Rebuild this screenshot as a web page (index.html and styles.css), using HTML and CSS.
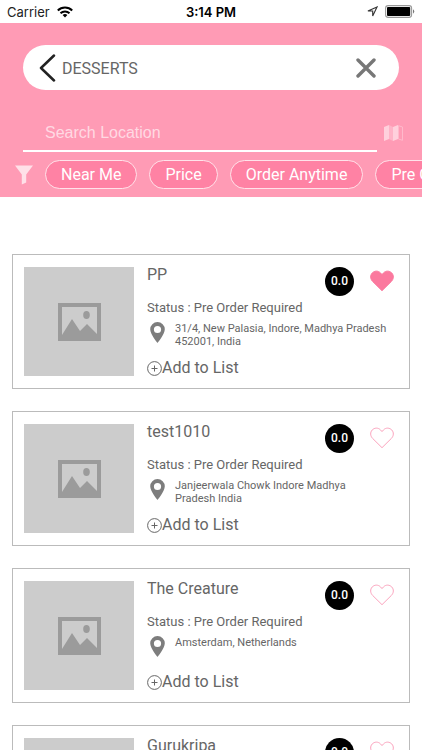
FILE: index.html
```
<!DOCTYPE html>
<html lang="en">
<head>
<meta charset="utf-8">
<meta name="viewport" content="width=device-width, initial-scale=1">
<title>Desserts</title>
<link rel="stylesheet" href="styles.css">
</head>
<body>
<svg class="sprite" aria-hidden="true">
  <symbol id="picture" viewBox="0 0 43 38">
    <path fill="#9b9b9b" fill-rule="evenodd" d="M0 0H43V38H0ZM4 4V32L14 16 22 28 29 21 39 31V4Z"/>
    <ellipse cx="28.500" cy="12" rx="3.300" ry="4" fill="#9b9b9b"/>
  </symbol>
  <symbol id="pin" viewBox="0 0 15 21">
    <path fill="#7d7d7d" fill-rule="evenodd" d="M7.500 0A7.300 7.300 0 0 0 .2 7.300C.2 12.500 7.500 21 7.500 21S14.800 12.500 14.800 7.300A7.300 7.300 0 0 0 7.500 0ZM7.500 3.900A3.600 3.600 0 1 1 7.500 11.100A3.600 3.600 0 1 1 7.500 3.900Z"/>
  </symbol>
  <symbol id="plus" viewBox="0 0 15 15">
    <path fill="none" stroke="#666" d="M7.500 .6A6.900 6.900 0 1 1 7.500 14.400A6.900 6.900 0 1 1 7.500 .6ZM7.500 4.500V10.500M4.500 7.500H10.500"/>
  </symbol>
  <symbol id="heart" viewBox="0 0 24 22">
    <path d="M12 20.700 2.600 11.400C.1 8.900 .1 5.200 2.200 3 4.500 .6 8.200 .5 10.400 2.800L12 4.600 13.600 2.800C15.800 .5 19.500 .6 21.800 3 23.900 5.200 23.900 8.900 21.400 11.400Z"/>
  </symbol>
</svg>
<div class="app">
  <div class="status-bar">
    <div class="carrier">
      <span>Carrier</span>
      <svg width="16" height="12" viewBox="0 0 16 12" aria-hidden="true"><g fill="none" stroke="#000" stroke-width="2"><path d="M.8 4.500A10.200 10.200 0 0 1 15.200 4.500"/><path d="M3.500 7.300A6.400 6.400 0 0 1 12.500 7.300"/></g><path d="M8 11.600 5.600 9.100A3.400 3.400 0 0 1 10.400 9.100Z"/></svg>
    </div>
    <time class="clock">3:14 PM</time>
    <div class="power">
      <svg width="11" height="11" viewBox="0 0 11 11" aria-hidden="true"><path fill="none" stroke="#333" stroke-width="1.100" d="M10 1 .9 5H5.700V10Z"/></svg>
      <svg width="30" height="13" viewBox="0 0 30 13" aria-hidden="true"><rect x=".6" y=".6" width="26" height="11.800" rx="2.600" fill="#fff" stroke="#999" stroke-width="1.100"/><rect x="2" y="2" width="23.200" height="9" rx="1"/><path fill="#777" d="M28 4.300Q30.500 6.500 28 8.700Z"/></svg>
    </div>
  </div>
  <header class="header">
    <div class="search-pill">
      <button class="icon-button" aria-label="Back"><svg width="17" height="28" viewBox="0 0 17 28"><path fill="none" stroke="#222" stroke-width="2.500" stroke-linecap="round" stroke-linejoin="round" d="M15 1.500 2 14 15 26.500"/></svg></button>
      <h1 class="heading">DESSERTS</h1>
      <button class="icon-button" aria-label="Clear"><svg width="20" height="20" viewBox="0 0 20 20"><path stroke="#777" stroke-width="3.400" stroke-linecap="round" d="M2 2 18 18M18 2 2 18"/></svg></button>
    </div>
    <div class="location">
      <input class="location-input" type="text" placeholder="Search Location" aria-label="Search Location">
      <button class="icon-button" aria-label="Map"><svg width="19" height="16" viewBox="0 0 19 16"><path fill="#ffd0dc" d="M0 2 5 0V14L0 16Z"/><path fill="#ffb3c7" d="M5 0 9 2V16L5 14Z"/><path fill="#ffd0dc" d="M9 2 14 0V14L9 16Z"/><path fill="none" stroke="#ffb9cb" d="M14.500 .7 18.500 2V15.300L14.500 14Z"/></svg></button>
    </div>
    <div class="filters">
      <button class="icon-button" aria-label="Filter"><svg width="18" height="20" viewBox="0 0 18 20"><path fill="#ffe0e8" d="M0 .5H18L11.200 9.500V17.500L6.800 19.500V9.500Z"/></svg></button>
      <button class="chip">Near Me</button>
      <button class="chip">Price</button>
      <button class="chip">Order Anytime</button>
      <button class="chip">Pre Order</button>
    </div>
  </header>
  <main class="list">
    <article class="card">
      <div class="photo"><svg width="43" height="38"><use href="#picture"/></svg></div>
      <div class="details">
        <div class="top-row"><h2 class="name">PP</h2><span class="rating">0.0</span><button class="icon-button like liked" aria-label="Remove favourite"><svg width="24" height="22"><use href="#heart"/></svg></button></div>
        <p class="order-status">Status : Pre Order Required</p>
        <div class="place"><svg width="15" height="21"><use href="#pin"/></svg><address class="address">31/4, New Palasia, Indore, Madhya Pradesh 452001, India</address></div>
        <button class="add"><svg width="15" height="15"><use href="#plus"/></svg>Add to List</button>
      </div>
    </article>
    <article class="card">
      <div class="photo"><svg width="43" height="38"><use href="#picture"/></svg></div>
      <div class="details">
        <div class="top-row"><h2 class="name">test1010</h2><span class="rating">0.0</span><button class="icon-button like" aria-label="Add favourite"><svg width="24" height="22"><use href="#heart"/></svg></button></div>
        <p class="order-status">Status : Pre Order Required</p>
        <div class="place"><svg width="15" height="21"><use href="#pin"/></svg><address class="address">Janjeerwala Chowk Indore Madhya Pradesh India</address></div>
        <button class="add"><svg width="15" height="15"><use href="#plus"/></svg>Add to List</button>
      </div>
    </article>
    <article class="card">
      <div class="photo"><svg width="43" height="38"><use href="#picture"/></svg></div>
      <div class="details">
        <div class="top-row"><h2 class="name">The Creature</h2><span class="rating">0.0</span><button class="icon-button like" aria-label="Add favourite"><svg width="24" height="22"><use href="#heart"/></svg></button></div>
        <p class="order-status">Status : Pre Order Required</p>
        <div class="place"><svg width="15" height="21"><use href="#pin"/></svg><address class="address">Amsterdam, Netherlands</address></div>
        <button class="add"><svg width="15" height="15"><use href="#plus"/></svg>Add to List</button>
      </div>
    </article>
    <article class="card">
      <div class="photo"><svg width="43" height="38"><use href="#picture"/></svg></div>
      <div class="details">
        <div class="top-row"><h2 class="name">Gurukripa</h2><span class="rating">0.0</span><button class="icon-button like" aria-label="Add favourite"><svg width="24" height="22"><use href="#heart"/></svg></button></div>
      </div>
    </article>
  </main>
</div>
</body>
</html>
```
FILE: styles.css
```
* {
  box-sizing: border-box;
}

body {
  margin: 0;
  background: #fff;
  color: #666;
  font-family: Roboto, "Liberation Sans", sans-serif;
  font-size: 16px;
}

button {
  margin: 0;
  padding: 0;
  border: 0;
  background: none;
  color: inherit;
  font: inherit;
}

svg {
  display: block;
  flex: none;
}

.sprite {
  position: absolute;
  width: 0;
  height: 0;
}

.app {
  display: flex;
  flex-direction: column;
  height: 100vh;
  overflow: hidden;
}

.status-bar {
  display: grid;
  grid-template-columns: 1fr auto 1fr;
  align-items: center;
  flex: none;
  height: 23px;
  padding: 0 7px;
  color: #222;
  font-family: Inter, "Liberation Sans", sans-serif;
  font-size: 13px;
}

.carrier,
.power {
  display: flex;
  align-items: center;
  gap: 7px;
}

.power {
  justify-content: flex-end;
}

.clock {
  color: #000;
  font-weight: 600;
}

.header {
  flex: none;
  padding: 22px 0 8px;
  background: #ff9bb5;
}

.search-pill {
  display: flex;
  align-items: center;
  gap: 6px;
  height: 45px;
  margin: 0 23px;
  padding: 0 23px 0 16px;
  border-radius: 23px;
  background: #fff;
}

.heading {
  flex: 1;
  margin: 0;
  padding-top: 2px;
  font-size: 16px;
  font-weight: 400;
}

.location {
  display: flex;
  align-items: center;
  gap: 7px;
  margin: 24px 19px 8px 23px;
}

.location-input {
  flex: 1;
  min-width: 0;
  height: 38px;
  padding: 2px 22px 0;
  border: 0;
  border-bottom: 2px solid #fff;
  border-radius: 0;
  background: none;
  color: #fff;
  font-family: "Liberation Sans", sans-serif;
  font-size: 16px;
}

.location-input::placeholder {
  color: #ffd9e3;
  opacity: 1;
}

.filters {
  display: flex;
  align-items: center;
  gap: 12px;
  padding-left: 15px;
  overflow: hidden;
}

.chip {
  flex: none;
  height: 29px;
  padding: 0 15px;
  border: 1px solid #ffe3ea;
  border-radius: 15px;
  background: #ff82a4;
  color: #fff;
}

.list {
  display: flex;
  flex-direction: column;
  gap: 22px;
  min-height: 0;
  padding: 57px 12px 22px;
  overflow: hidden;
}

.card {
  display: flex;
  flex: none;
  gap: 13px;
  padding: 12px 11px;
  border: 1px solid #bbb;
}

.photo {
  display: flex;
  align-items: center;
  justify-content: center;
  flex: none;
  width: 110px;
  height: 109px;
  background: #ccc;
}

.details {
  display: flex;
  flex-direction: column;
  flex: 1;
  min-width: 0;
}

.top-row {
  display: flex;
  align-items: center;
  height: 28px;
}

.name {
  flex: 1;
  align-self: flex-start;
  margin: 0;
  font-size: 16px;
  line-height: 16px;
  font-weight: 400;
}

.rating {
  flex: none;
  width: 29px;
  height: 29px;
  border-radius: 50%;
  background: #000;
  color: #fff;
  font-size: 12px;
  font-weight: 500;
  line-height: 29px;
  text-align: center;
}

.like {
  margin: 0 4px 0 16px;
  fill: none;
  stroke: #fba3bd;
}

.liked {
  fill: #fb799e;
  stroke: #fb799e;
}

.order-status {
  margin: 5px 0 6px;
  font-size: 13px;
  line-height: 16px;
}

.place {
  display: flex;
  gap: 10px;
  height: 38px;
  padding: 0 10px 0 3px;
}

.address {
  font-size: 11px;
  font-style: normal;
  line-height: 13px;
}

.add {
  display: flex;
  align-items: center;
  align-self: flex-start;
  line-height: 16px;
}
```
